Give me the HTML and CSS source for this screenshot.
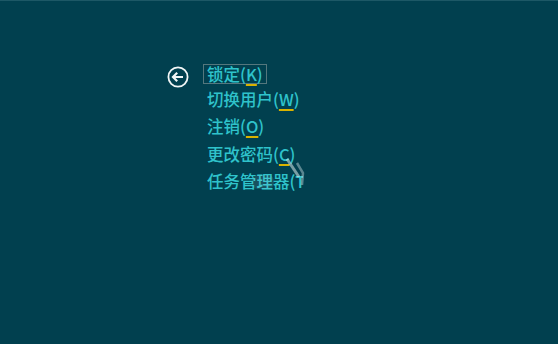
FILE: index.html
```html
<!DOCTYPE html>
<html lang="zh-CN">
<head>
<meta charset="utf-8">
<link rel="stylesheet" href="styles.css">
</head>
<body>
<div class="screen">
  <div class="menu">
    <svg class="back" width="22" height="22" viewBox="0 0 22 22">
      <circle cx="11" cy="11" r="9.6" fill="none" stroke="#f2f6f6" stroke-width="1.8"/>
      <path d="M6 11 H16 M10.2 6.8 L6 11 L10.2 15.2" fill="none" stroke="#f2f6f6" stroke-width="2.2" stroke-linecap="butt" stroke-linejoin="miter"/>
    </svg>
    <ul class="items">
      <li class="item"><span class="focus">锁定(<u>K</u>)</span></li>
      <li class="item">切换用户(<u>W</u>)</li>
      <li class="item">注销(<u>O</u>)</li>
      <li class="item">更改密码(<u>C</u>)</li>
      <li class="item clip">任务管理器(T)</li>
    </ul>
    <div class="ghost"></div>
    <svg class="cursor" width="24" height="36" viewBox="0 0 24 36">
      <path d="M4 2 L16 20" stroke="rgba(220,235,235,0.55)" stroke-width="3" fill="none"/>
      <path d="M14 6 L20 16 L19 28" stroke="rgba(200,220,225,0.45)" stroke-width="2.5" fill="none"/>
    </svg>
  </div>
</div>
</body>
</html>
```
FILE: styles.css
```css
html, body {
  margin: 0;
  padding: 0;
}
body {
  background: #01404f;
  font-family: "Noto Sans CJK SC", "Microsoft YaHei", sans-serif;
}
.screen {
  width: 558px;
  height: 344px;
  overflow: hidden;
  border-top: 1px solid #1d5866;
  box-sizing: border-box;
}
.menu {
  position: relative;
  display: flex;
  align-items: flex-start;
  padding: 57px 0 0 167px;
}
.back {
  margin-top: 8px;
  margin-right: 11px;
  flex: none;
}
.items {
  list-style: none;
  margin: 0;
  padding: 0;
}
.item {
  color: #2fc3cb;
  font-size: 16.5px;
  font-weight: 500;
  line-height: 27.5px;
  height: 27.5px;
  padding: 0 0 0 7px;
  white-space: nowrap;
}
.item u {
  text-decoration: underline;
  text-decoration-color: #d9b200;
  text-decoration-thickness: 2px;
  text-underline-offset: 3px;
}
.focus {
  display: inline-block;
  box-sizing: border-box;
  height: 20px;
  line-height: 18px;
  vertical-align: middle;
  margin-left: -4px;
  border: 1px solid #55777d;
  padding: 0 3px;
}
.clip {
  width: 96px;
  overflow: hidden;
}
.ghost {
  position: absolute;
  left: 252px;
  top: 174px;
  width: 22px;
  height: 14px;
  background: rgba(190, 215, 220, 0.12);
  border-radius: 6px;
}
.cursor {
  position: absolute;
  left: 283px;
  top: 156px;
}
```
